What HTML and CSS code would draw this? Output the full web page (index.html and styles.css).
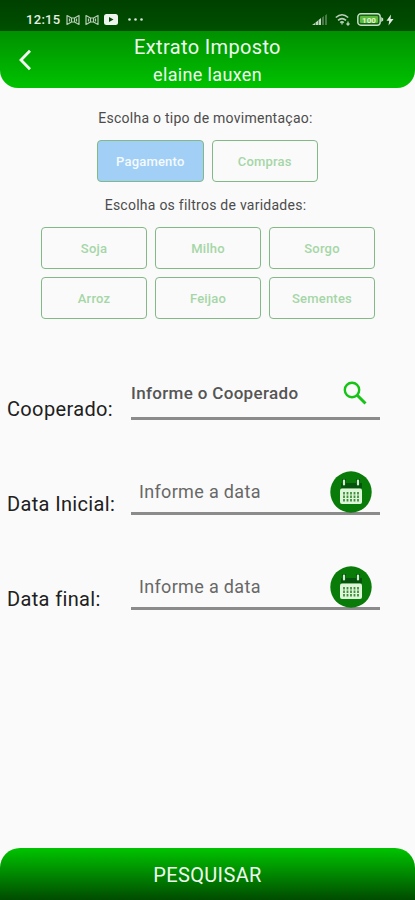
FILE: index.html
```html
<!DOCTYPE html>
<html lang="pt-BR">
<head>
  <meta charset="UTF-8">
  <title>Extrato Imposto</title>
  <link rel="stylesheet" href="styles.css">
</head>
<body>
  <svg width="0" height="0" class="sprite">
    <symbol id="mask" viewBox="0 0 14 12">
      <path d="M1 1.500 5.500 4h3L13 1.500v9L8.500 8h-3L1 10.500zM3.500 4.500v3M10.500 4.500v3M5.500 4v4M8.500 4v4" fill="none" stroke="#b5ccb5" stroke-width="1.200" stroke-linejoin="round"/>
    </symbol>
    <symbol id="calendar" viewBox="0 0 42 42">
      <circle cx="21" cy="21" r="20.700" fill="#087b08"/>
      <path d="M11 12h21v5H11z" fill="#07520c"/>
      <path d="M14 8v6M28 8v6" stroke="#07520c" stroke-width="4"/>
      <path d="M14 9.500v4M28 9.500v4" stroke="#c9efc9" stroke-width="2.200" stroke-linecap="round"/>
      <rect x="10" y="17.500" width="22" height="15.500" rx="2" fill="#dff5d9"/>
      <path d="M14 21v9.500M17.500 21v9.500M21 21v9.500M24.500 21v9.500M28 21v9.500" stroke="#3f8f3a" stroke-width="1.800" stroke-dasharray="2.500 1"/>
    </symbol>
  </svg>

  <header class="header">
    <div class="status">
      <span class="time">12:15</span>
      <svg class="mask" width="14" height="12"><use href="#mask"/></svg>
      <svg class="mask" width="14" height="12"><use href="#mask"/></svg>
      <svg class="video" width="14" height="11" viewBox="0 0 14 11">
        <rect width="14" height="11" rx="2.500" fill="#eef5ee"/>
        <path d="M5 3v5l4.500-2.500z" fill="#064a06"/>
      </svg>
      <svg class="dots" width="15" height="3" viewBox="0 0 15 3" fill="#d5e5d5">
        <circle cx="1.500" cy="1.500" r="1.300"/><circle cx="7.500" cy="1.500" r="1.300"/><circle cx="13.500" cy="1.500" r="1.300"/>
      </svg>
      <svg class="signal" width="16" height="12" viewBox="0 0 16 12">
        <path d="M0 11 3 9v2zM3.500 8.500l2.500-2V11H3.500zM6.500 6l2.500-2v7H6.500z" fill="#c5d5c5"/>
        <path d="M10 3.500l2-1.500v9h-2zM13 1.500 15 0v11h-2z" fill="#4a7a4a"/>
      </svg>
      <svg class="wifi" width="16" height="13" viewBox="0 0 16 13" fill="none" stroke="#b9cfb9" stroke-width="1.600">
        <path d="M.8 4.500q6.200-5.500 12.400 0M3 7.300q4-3.500 8 0M5.200 9.700q1.800-1.500 3.600 0"/>
        <path d="M7 9v2.500M13 8.500v3.500M11.500 10.500l1.500 1.500 1.500-1.500" stroke-width="1.300"/>
      </svg>
      <svg class="battery" width="27" height="13" viewBox="0 0 27 13">
        <rect x=".8" y=".8" width="22.400" height="11.400" rx="3" fill="#176617" stroke="#c8dec8" stroke-width="1.400"/>
        <rect x="3" y="3" width="18" height="7" rx="1" fill="#5dbb3c"/>
        <path d="M24.200 4v5l2-1.500v-2z" fill="#c8dec8"/>
        <text x="12" y="9.700" class="charge">100</text>
      </svg>
      <svg class="bolt" width="8" height="12" viewBox="0 0 8 12">
        <path d="M5 .5.500 6.800h2.700L2.500 11.500 7.500 5H4.500z" fill="#e0ece0"/>
      </svg>
    </div>
    <div class="toolbar">
      <svg class="back" width="14" height="22" viewBox="0 0 14 22">
        <path d="M12 1.800 3 11l9 9.200" fill="none" stroke="#f2fbf2" stroke-width="2.800"/>
      </svg>
      <div class="titles">
        <h1>Extrato Imposto</h1>
        <h2>elaine lauxen</h2>
      </div>
    </div>
  </header>

  <main>
    <p class="hint">Escolha o tipo de movimentaçao:</p>
    <div class="options types">
      <button class="option selected">Pagamento</button>
      <button class="option">Compras</button>
    </div>
    <p class="hint filters">Escolha os filtros de varidades:</p>
    <div class="options varieties">
      <button class="option">Soja</button>
      <button class="option">Milho</button>
      <button class="option">Sorgo</button>
      <button class="option">Arroz</button>
      <button class="option">Feijao</button>
      <button class="option">Sementes</button>
    </div>

    <div class="form">
      <div class="row">
        <span class="label">Cooperado:</span>
        <div class="field member">
          <span class="value">Informe o Cooperado</span>
          <svg class="search" width="24" height="24" viewBox="0 0 24 24" fill="none" stroke="#16c416" stroke-width="2.400">
            <circle cx="9" cy="9" r="7.200"/><path d="m14 14 8.500 8.500" stroke-width="3"/>
          </svg>
        </div>
      </div>
      <div class="row">
        <span class="label">Data Inicial:</span>
        <div class="field date">
          <span class="value">Informe a data</span>
          <svg class="calendar" width="42" height="42"><use href="#calendar"/></svg>
        </div>
      </div>
      <div class="row">
        <span class="label">Data final:</span>
        <div class="field date">
          <span class="value">Informe a data</span>
          <svg class="calendar" width="42" height="42"><use href="#calendar"/></svg>
        </div>
      </div>
    </div>
  </main>

  <button class="submit">PESQUISAR</button>
</body>
</html>
```
FILE: styles.css
```css
* {
  box-sizing: border-box;
}

body {
  margin: 0;
  height: 900px;
  display: flex;
  flex-direction: column;
  font-family: Roboto, sans-serif;
  background: #fafafa;
  overflow: hidden;
}

button {
  font-family: inherit;
  padding: 0;
}

svg {
  display: block;
  flex: none;
}

.sprite {
  position: absolute;
}

.header {
  height: 88px;
  border-radius: 0 0 18px 18px;
  overflow: hidden;
  flex: none;
}

.status {
  height: 31px;
  padding: 8px 20px 0 26px;
  display: flex;
  align-items: center;
  background: linear-gradient(#004000, #005000);
}
.time {
  width: 35px;
  font-size: 13px;
  font-weight: 500;
  letter-spacing: 0.3px;
  color: #e5efe5;
}
.mask {
  margin-left: 5px;
}
.video {
  margin-left: 5px;
}
.dots {
  margin-left: 10px;
}
.signal {
  margin-left: auto;
}
.wifi {
  margin-left: 7px;
}
.battery {
  margin-left: 6px;
}
.charge {
  font-size: 8px;
  font-weight: 700;
  text-anchor: middle;
  fill: #e5f5d5;
}
.bolt {
  margin-left: 2px;
  margin-right: 1px;
}

.toolbar {
  height: 57px;
  display: grid;
  grid-template-columns: 42px 1fr 42px;
  background: linear-gradient(#009000, #00c200);
}
.back {
  margin: 18px 0 0 18px;
}
.titles {
  text-align: center;
  color: #eefbee;
}
.titles h1 {
  margin: 4px 0 0;
  font-size: 20px;
  line-height: 25px;
  font-weight: 400;
  letter-spacing: 0.35px;
}
.titles h2 {
  margin: 2px 0 0;
  font-size: 18px;
  line-height: 26px;
  font-weight: 400;
  letter-spacing: 0.35px;
}

main {
  flex: 1;
}

.hint {
  margin: 20px 0 12px;
  padding-right: 4px;
  font-size: 14px;
  line-height: 20px;
  letter-spacing: 0.25px;
  text-align: center;
  color: #4c4c4c;
}
.hint.filters {
  margin: 13px 0 12px;
}

.options {
  display: grid;
  gap: 8px;
}
.types {
  width: 221px;
  margin-left: 97px;
  grid-template-columns: 1fr 1fr;
}
.varieties {
  width: 334px;
  margin-left: 41px;
  grid-template-columns: repeat(3, 1fr);
}
.option {
  height: 42px;
  border: 1px solid #83b887;
  border-radius: 4px;
  background: none;
  font-size: 13px;
  font-weight: 500;
  letter-spacing: 0.2px;
  color: #a5d6a7;
}
.selected {
  background: #a2cff5;
  color: #f4faff;
}

.form {
  margin-top: 51px;
}
.row {
  height: 50px;
  margin-bottom: 45px;
  padding: 0 35px 0 7px;
  display: grid;
  grid-template-columns: 124px 1fr;
}
.label {
  padding-top: 27px;
  font-size: 20px;
  line-height: 24px;
  letter-spacing: 0.35px;
  color: #202020;
}
.field {
  height: 50px;
  display: flex;
  align-items: flex-start;
  justify-content: space-between;
  border-bottom: 3px solid #8b8b8b;
}
.value {
  padding-top: 11px;
  font-size: 17px;
  line-height: 24px;
  letter-spacing: 0.33px;
}
.member .value {
  font-weight: 500;
  color: #555;
}
.date .value {
  padding: 15px 0 0 8px;
  font-size: 18px;
  color: #686868;
}
.search {
  margin: 11px 13px 0 0;
}
.calendar {
  margin: 6px 8px 0 0;
}

.submit {
  height: 52px;
  flex: none;
  border: 0;
  border-radius: 20px 20px 0 0;
  padding-top: 2px;
  background: linear-gradient(#00c400, #004c00);
  font-size: 20px;
  letter-spacing: 0.35px;
  color: #eefbee;
}
```
